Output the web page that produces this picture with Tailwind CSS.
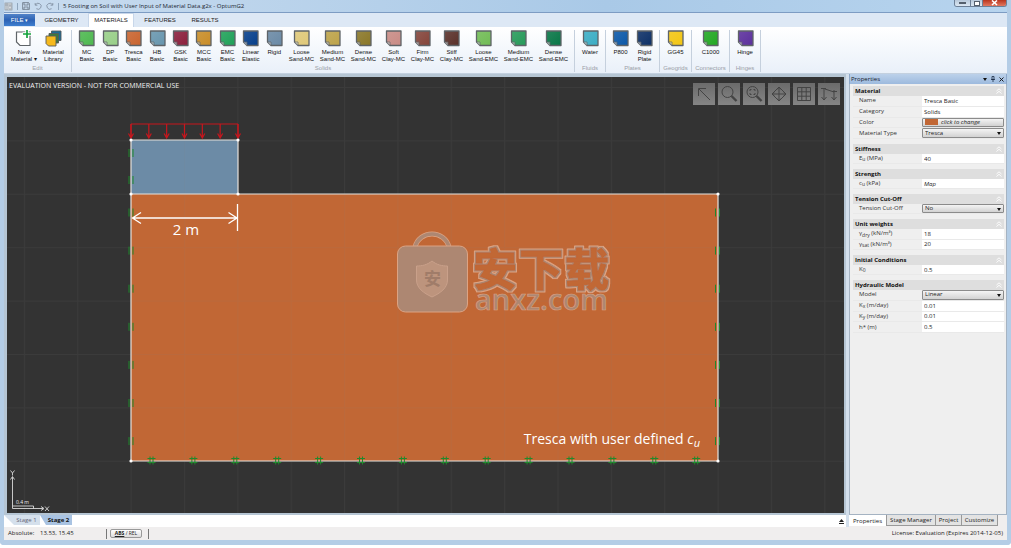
<!DOCTYPE html>
<html lang="en">
<head>
<meta charset="utf-8">
<title>5 Footing on Soil with User Input of Material Data.g2x - OptumG2</title>
<script src="https://cdn.jsdelivr.net/npm/@tailwindcss/browser@4"></script>
</head>
<body class="bg-white font-['Open_Sans',sans-serif] text-[6px] text-[#222]">
<div class="flex h-screen flex-col pb-[3px]">
<div class="flex min-h-0 flex-1 flex-col rounded-b border-x-4 border-b-[5px] border-[#b4cde6] bg-[#b4cde6]">

  <header class="flex h-[13px] shrink-0 items-start justify-between border-b border-[#7d9cc3] bg-linear-to-r from-[#c9dcef] via-[#a9c9e7] via-60% to-[#b7d4ee]">
    <div class="flex h-[12px] items-center gap-[4px]">
      <svg class="h-[9px] w-[9px]" viewBox="0 0 9 9"><rect x="1" y="1" width="7" height="7" fill="#d9dde0" stroke="#8a949e" stroke-width=".7"/><path d="M1 3h7M3 1v7M5 4h2v3H5z" stroke="#8a949e" stroke-width=".7" fill="#fff"/></svg>
      <span class="h-[7px] w-px bg-[#8fa5bc]"></span>
      <button aria-label="Save"><svg class="h-[8px] w-[8px]" viewBox="0 0 8 8" fill="none" stroke="#6d7a88" stroke-width=".8"><path d="M.6.6h6l.8.8v6H.6z"/><path d="M2 .6v2.400h4V.6M2 7.400V5h4v2.400"/></svg></button>
      <button aria-label="Undo"><svg class="h-[8px] w-[8px]" viewBox="0 0 8 8" fill="none" stroke="#8291a3" stroke-width=".9"><path d="M1.200 1v2.200h2.200M1.400 3a3 3 0 1 1 1 3.700"/></svg></button>
      <button aria-label="Redo"><svg class="h-[8px] w-[8px]" viewBox="0 0 8 8" fill="none" stroke="#8291a3" stroke-width=".9"><path d="M6.800 1v2.200H4.600M6.600 3a3 3 0 1 0-1 3.700"/></svg></button>
      <span class="h-[7px] w-px bg-[#8fa5bc]"></span>
      <h1 class="text-[6px] whitespace-nowrap text-[#1c2733]">5 Footing on Soil with User Input of Material Data.g2x - OptumG2</h1>
    </div>
    <div class="flex h-[7px] overflow-hidden rounded-b-[3px] border border-t-0 border-[#6c7f96]">
      <button aria-label="Minimize" class="flex w-[16px] items-center justify-center border-r border-[#6c7f96] bg-linear-to-b from-[#b7c8da] to-[#dce8f3]"><span class="h-[2px] w-[7px] border border-[#55606d] bg-white"></span></button>
      <button aria-label="Restore" class="flex w-[12px] items-center justify-center border-r border-[#6c7f96] bg-linear-to-b from-[#b7c8da] to-[#dce8f3]"><span class="h-[5px] w-[6px] border border-[#55606d] bg-white"></span></button>
      <button aria-label="Close" class="flex w-[23px] items-center justify-center bg-linear-to-b from-[#b8341d] to-[#e2775f]"><svg class="h-[6px] w-[7px]" viewBox="0 0 7 6"><path d="M1 .5l5 4.500M6 .5L1 5" stroke="#fff" stroke-width="1.600"/></svg></button>
    </div>
  </header>

  <nav class="flex h-[14px] shrink-0 items-stretch bg-[#dde8f5] font-['Liberation_Sans',sans-serif] text-[6px] text-[#222]">
    <button class="my-[1px] w-[31px] bg-linear-to-b from-[#5283c8] via-[#2c62b4] to-[#3f7fd0] text-white">FILE <span class="text-[5px]">▾</span></button>
    <a href="#" class="flex w-[53px] items-center justify-center">GEOMETRY</a>
    <a href="#" class="flex w-[46px] items-center justify-center border-x border-t border-[#c8d7ea] bg-white">MATERIALS</a>
    <a href="#" class="flex w-[52px] items-center justify-center">FEATURES</a>
    <a href="#" class="flex w-[38px] items-center justify-center">RESULTS</a>
  </nav>

  <section id="ribbon" aria-label="Materials" class="flex h-[47px] shrink-0 items-stretch border-b border-[#c3d0df] bg-linear-to-b from-white to-[#e9f0f9] pt-[3px] pb-[1px] font-['Liberation_Sans',sans-serif] text-[6px] leading-[7px] text-[#111]"></section>

  <div class="flex min-h-0 flex-1 bg-[#d3dfec]">
    <main class="flex min-w-0 flex-1 flex-col">
      <div class="relative min-h-0 flex-1 border-2 border-t-[3px] border-l-[3px] border-[#b5c5d3] bg-[#333333]">
        <svg class="block h-full w-full" viewBox="7 77 837 436" preserveAspectRatio="xMinYMin slice" font-family="'Open Sans',sans-serif">
          <defs>
            <pattern id="grid" x="130.600" y="87" width="53.360" height="53.400" patternUnits="userSpaceOnUse"><path d="M.5 0v53.400M0 .5h53.360" stroke="#808080" stroke-opacity=".1"/></pattern>
            <filter id="outline" x="-5%" y="-10%" width="110%" height="125%">
              <feMorphology in="SourceAlpha" operator="dilate" radius="2" result="wide"/>
              <feFlood flood-color="#dba384"/><feComposite in2="wide" operator="in" result="rim"/>
              <feMorphology in="SourceAlpha" operator="dilate" radius="1" result="thin"/>
              <feFlood flood-color="#a98570"/><feComposite in2="thin" operator="in" result="line"/>
              <feMerge><feMergeNode in="rim"/><feMergeNode in="line"/><feMergeNode in="SourceGraphic"/></feMerge>
            </filter>
            <g id="roller"><path d="M-1.500-4v8M1.500-4v8M-4-2h8M-4 2h8" stroke="#1f8a2c" stroke-width="1"/></g>
            <g id="side"><path d="M-2-4v8M2-4v8" stroke="#1f8a2c" stroke-width="1"/></g>
            <g id="load"><path d="M0 124v13M-2.500 133.500L0 138l2.500-4.500" fill="none" stroke="#c8161d" stroke-width="1.200"/></g>
          </defs>
          <rect x="131" y="194" width="587" height="267" fill="#c16735"/>
          <rect x="131" y="140" width="107" height="54" fill="#6c8ba6"/>
          <rect x="7" y="77" width="837" height="436" fill="url(#grid)"/>
          <path d="M131 140h107v54H131zM131 194h587v267H131z" fill="none" stroke="#e6e1dc" stroke-width="1.200"/>
          <g id="supports"></g>
          <path d="M131 138v-14h107v14" fill="none" stroke="#c8161d"/>
          <g id="loads"></g>
          <g fill="#fff"><circle cx="131" cy="140" r="1.600"/><circle cx="238" cy="140" r="1.600"/><circle cx="131" cy="194" r="1.600"/><circle cx="238" cy="194" r="1.600"/><circle cx="718" cy="194" r="1.600"/><circle cx="718" cy="461" r="1.600"/><circle cx="131" cy="461" r="1.600"/></g>
          <path d="M132.500 218h104M141 212.500L132.500 218l8.500 5.500M228.500 212.500L237 218l-8.500 5.500M237.500 204v27" fill="none" stroke="#fff" stroke-width="1.300"/>
          <text x="186" y="235" font-size="15" fill="#fff" text-anchor="middle">2 m</text>
          <text x="700" y="444" font-size="14" fill="#fff" text-anchor="end">Tresca with user defined <tspan font-style="italic">c</tspan><tspan font-style="italic" font-size="11" dy="3">u</tspan></text>

          <g>
            <path d="M415 247c2-8 9-13 17-13s15 5 17 13" fill="none" stroke="#dba384" stroke-width="5"/>
            <path d="M415 247c2-8 9-13 17-13s15 5 17 13" fill="none" stroke="#ad8772" stroke-width="3.500"/>
            <rect x="397.500" y="246" width="70" height="66" rx="8" fill="#ad8772" stroke="#dba384"/>
            <path d="M432 261c5 4 10 5 15.500 5v14c0 8-7 13-15.500 17-8.500-4-15.500-9-15.500-17v-14c5.500 0 10.500-1 15.500-5z" fill="#bd947d" stroke="#c9a08a"/>
            <text x="432.500" y="285" font-size="17" font-weight="700" text-anchor="middle" fill="#a07c69" font-family="'Noto Sans CJK SC',sans-serif">安</text>
            <text x="473 519 565" y="286" font-family="'Noto Sans CJK SC',sans-serif" font-size="44" font-weight="700" fill="#c16735" stroke="#c16735" stroke-width="1" stroke-linejoin="round" filter="url(#outline)">安下载</text>
            <text x="475" y="310" font-size="29" font-weight="600" fill="#ad8772" stroke="#dba384" stroke-width=".6">anxz.com</text>
          </g>

          <g fill="none" stroke="#d8d8d8" stroke-width=".9"><path d="M12.500 508.500V477M10.500 479.500l2-3 2 3M12.500 508.500H43M41 506.500l3 2-3 2M12.500 506h21v2.500M10.500 470.500l2 2.500 2-2.500M12.500 473v2.500M45 506.500l4 4.500M49 506.500l-4 4.500"/></g>
          <text x="16" y="504" font-size="5" fill="#eee">0.4 m</text>
        </svg>
        <p class="absolute top-[4px] left-[2px] text-[7px] leading-[10px] text-[#f2f2f2]">EVALUATION VERSION - NOT FOR COMMERCIAL USE</p>
        <div id="tools" class="absolute top-[6px] right-[4px] flex gap-[3px]"></div>
      </div>
      <div class="flex h-[12px] shrink-0 items-start justify-between bg-white pr-[2px]">
        <div class="flex text-[6px] leading-[11px]">
          <button class="h-[10px] w-[36px] bg-[#d5e0ec] pl-[9px] text-[#667] [clip-path:polygon(0_0,100%_0,100%_100%,10px_100%)]">Stage 1</button>
          <button class="h-[10px] w-[32px] bg-[#a9c3e2] pl-[5px] font-bold text-[#111] [clip-path:polygon(0_0,100%_0,100%_100%,6px_100%)]">Stage 2</button>
        </div>
        <button aria-label="Expand" class="mt-[4px]"><svg class="h-[5px] w-[5px]" viewBox="0 0 5 5"><path d="M0 3l2.500-3L5 3zM0 4h5v1H0z" fill="#222"/></svg></button>
      </div>
    </main>

    <aside class="ml-[3px] flex w-[158px] shrink-0 flex-col">
      <div class="flex h-[10px] shrink-0 items-center justify-between border-x border-[#8ba6c8] bg-linear-to-b from-[#bcd1ea] to-[#9dbade] pr-[2px] pl-px text-[#16202c]">
        <h2>Properties</h2>
        <div class="flex items-center gap-[4px]">
          <button aria-label="Panel menu"><svg class="h-[3px] w-[4px]" viewBox="0 0 4 3"><path d="M0 0h4L2 3z" fill="#111"/></svg></button>
          <button aria-label="Pin"><svg class="h-[6px] w-[4px]" viewBox="0 0 4 6"><path d="M1 .5h2v3H1zM0 3.500h4M2 3.500V6" fill="none" stroke="#1b2b45" stroke-width=".8"/></svg></button>
          <button aria-label="Close panel"><svg class="h-[5px] w-[5px]" viewBox="0 0 5 5"><path d="M.5.5l4 4M4.500.5l-4 4" stroke="#111" stroke-width=".9"/></svg></button>
        </div>
      </div>
      <div id="props" class="min-h-0 flex-1 border border-t-0 border-[#a5b3c2] bg-[#efefef] pt-[2px] pr-[2px] pl-[3px] leading-[9px]"></div>
      <div class="flex h-[12px] shrink-0 items-start bg-[#f0eeee] text-[6px] leading-[10px]">
        <button class="h-[11px] w-[38px] border-r border-[#999] bg-white">Properties</button>
        <button class="h-[11px] w-[49px] border-r border-b border-[#999] bg-[#e3e3e3]">Stage Manager</button>
        <button class="h-[11px] w-[26px] border-r border-b border-[#999] bg-[#e3e3e3]">Project</button>
        <button class="h-[11px] w-[36px] border-r border-b border-[#999] bg-[#e3e3e3]">Customize</button>
      </div>
    </aside>
  </div>

  <footer class="flex h-[13px] shrink-0 items-center bg-[#f0eeee] px-[4px]">
    <span class="w-[32px]">Absolute:</span><span class="w-[66px]">13.53, 15.45</span>
    <span class="h-[10px] w-px bg-[#777]"></span>
    <button class="mx-[3px] h-[9px] w-[32px] rounded-[2px] border border-[#999] bg-linear-to-b from-white to-[#ddd] text-[5px] leading-[7px]"><b class="underline">ABS</b> / REL</button>
    <span class="ml-[3px] h-[10px] w-px bg-[#777]"></span>
    <span class="ml-auto">License: Evaluation (Expires 2014-12-05)</span>
  </footer>
</div>
</div>

<script>
const swatch = c => `<svg class="h-[17px] w-[17px]" viewBox="0 0 17 17"><defs><linearGradient id="g${c.slice(1)}" x1="0" y1="0" x2="1" y2="1"><stop stop-color="${c}" stop-opacity=".88"/><stop offset="1" stop-color="${c}"/></linearGradient></defs><path d="M1.500 1H16v14.500H5L1.500 12z" fill="url(#g${c.slice(1)})" stroke="#5f6468" stroke-width="1.300" stroke-linejoin="round"/><path d="M1.500 12H5v3.500" fill="#fff" fill-opacity=".4" stroke="#5f6468" stroke-width=".7"/></svg>`;
const newIcon = `<svg class="h-[17px] w-[17px]" viewBox="0 0 17 17"><path d="M1.500 2H15v13.500H5L1.500 12z" fill="#fff" stroke="#5f6468" stroke-width="1.200"/><path d="M12 0v9M7.500 4H17" stroke="#fff" stroke-width="3.500"/><path d="M12 0v8M8 4h8" stroke="#16a23c" stroke-width="1.700"/></svg>`;
const libIcon = `<svg class="h-[17px] w-[17px]" viewBox="0 0 17 17" stroke="#55595c" stroke-width=".9"><path d="M6.500 1H16v9.500H6.500z" fill="#1b6c94"/><path d="M4 3.500h9.500V13H4z" fill="#3c7a3c"/><path d="M1 6h10v10H3.500L1 13.500z" fill="#f6b91c"/></svg>`;
const groups = [
  {name:'Edit', w:'w-[68px]', rows:[{w:'w-[68px] pl-[5px] pr-[3px]', items:[['New','Material ▾',newIcon],['Material','Library',libIcon]]}]},
  {name:'Solids', w:'w-[503px]', rows:[
    {w:'w-[211px]', items:[['MC','Basic','#4db84f'],['DP','Basic','#98cf88'],['Tresca','Basic','#c9642f'],['HB','Basic','#6896ae'],['GSK','Basic','#8b1f3c'],['MCC','Basic','#c98d28'],['EMC','Basic','#1fa158'],['Linear','Elastic','#063f8b'],['Rigid','','#6a89a5']]},
    {w:'w-[93px]', items:[['Loose','Sand-MC','#dfc878'],['Medium','Sand-MC','#bda349'],['Dense','Sand-MC','#8a7728']]},
    {w:'w-[87px]', items:[['Soft','Clay-MC','#c98b85'],['Firm','Clay-MC','#84443a'],['Stiff','Clay-MC','#5a3029']]},
    {w:'w-[105px]', items:[['Loose','Sand-EMC','#71bc55'],['Medium','Sand-EMC','#269a59'],['Dense','Sand-EMC','#077646']]}]},
  {name:'Fluids', w:'w-[31px]', rows:[{w:'w-[31px]', items:[['Water','','#3badc4']]}]},
  {name:'Plates', w:'w-[54px]', rows:[{w:'w-[48px]', items:[['P800','','#0b58a8'],['Rigid','Plate','#0c2f66']]}]},
  {name:'Geogrids', w:'w-[32px]', rows:[{w:'w-[32px]', items:[['GG45','','#f3c613']]}]},
  {name:'Connectors', w:'w-[38px]', rows:[{w:'w-[32px]', items:[['C1000','','#22a822']]}]},
  {name:'Hinges', w:'w-[31px]', rows:[{w:'w-[31px]', items:[['Hinge','','#5b2f9c']]}]}
];
document.getElementById('ribbon').innerHTML = groups.map(g => `
  <div class="flex ${g.w} shrink-0 flex-col justify-between border-r border-[#c5d0dd]">
    <div class="flex justify-center">${g.rows.map(r => `<div class="flex ${r.w}">${r.items.map(i => `
      <button class="flex min-w-0 flex-1 flex-col items-center whitespace-nowrap">${i[2][0]==='#' ? swatch(i[2]) : i[2]}<span class="mt-[2px]">${i[0]}</span><span>${i[1]}</span></button>`).join('')}</div>`).join('')}</div>
    <div class="text-center whitespace-nowrap text-[#9aa0a7]">${g.name}</div>
  </div>`).join('');

const sections = [
  ['Material','h-[43px]',[['Name','Tresca Basic'],['Category','Solids'],['Color','','color'],['Material Type','Tresca','select']]],
  ['Stiffness','h-[10px]',[['E<sub>u</sub> (MPa)','40']]],
  ['Strength','h-[10px]',[['c<sub>u</sub> (kPa)','Map','italic']]],
  ['Tension Cut-Off','h-[10px]',[['Tension Cut-Off','No','select']]],
  ['Unit weights','h-[21px]',[['γ<sub>dry</sub> (kN/m³)','18'],['γ<sub>sat</sub> (kN/m³)','20']]],
  ['Initial Conditions','h-[10px]',[['K<sub>0</sub>','0.5']]],
  ['Hydraulic Model','h-[43px]',[['Model','Linear','select'],['K<sub>x</sub> (m/day)','0.01'],['K<sub>y</sub> (m/day)','0.01'],['h* (m)','0.5']]]
];
let n = 0;
const field = (v, t) => {
  const id = 'f' + (++n);
  if (t === 'select') return [id, `<div class="relative h-full w-full"><select id="${id}" class="h-full w-full appearance-none rounded-[1px] border border-[#8b8b8b] bg-linear-to-b from-[#f4f4f4] to-[#d2d2d2] pl-[2px] leading-[7px]"><option>${v}</option></select><svg class="pointer-events-none absolute top-[4px] right-[3px] h-[3px] w-[4px]" viewBox="0 0 4 3"><path d="M0 0h4L2 3z" fill="#111"/></svg></div>`];
  if (t === 'color') return [id, `<button id="${id}" class="flex h-full w-full items-center gap-[3px] rounded-[1px] border border-[#8b8b8b] bg-linear-to-b from-[#f4f4f4] to-[#d2d2d2] pl-[2px] leading-[7px] italic"><span class="h-[6px] w-[13px] bg-[#c16735]"></span>click to change</button>`];
  return [id, `<input id="${id}" value="${v}" class="h-full w-full bg-white pl-[2px] ${t === 'italic' ? 'italic' : ''}">`];
};
document.getElementById('props').innerHTML = sections.map(([title, h, rows]) => `
  <section class="mb-[5px]">
    <h3 class="flex h-[10px] items-center justify-between bg-[#dedede] px-[2px] font-bold text-[#111]">${title}<svg class="h-[6px] w-[6px]" viewBox="0 0 6 6"><path d="M.5 3L3 .8 5.500 3M.5 5.500L3 3.300l2.500 2.200" fill="none" stroke="#fff" stroke-width=".9"/></svg></h3>
    <div class="flex flex-col ${h}">${rows.map(([l, v, t]) => { const [id, html] = field(v, t); return `<div class="flex min-h-0 flex-1 items-stretch border-b border-[#e9e9e9]"><label for="${id}" class="flex w-[69px] shrink-0 items-center pl-[6px] whitespace-nowrap text-[#333]"><span class="[&_sub]:text-[5px]">${l}</span></label><div class="min-w-0 flex-1">${html}</div></div>`; }).join('')}</div>
  </section>`).join('');

const tools = [
  ['Select','<path d="M6 6l11 11M5.500 13V5.500H13" />'],
  ['Zoom','<circle cx="9.500" cy="9" r="5.500"/><path d="M13.500 13l5 5" stroke-width="2.400"/>'],
  ['Zoom window','<circle cx="9.500" cy="9" r="5.500"/><path d="M7 8V6.500h1.500M10.500 6.500H12V8M12 10v1.500h-1.500M8.500 11.500H7V10"/><path d="M13.500 13l5 5" stroke-width="2.400"/>'],
  ['Pan','<path d="M11 4l7 7-7 7-7-7zM11 5v12M5 11h12M9 6.500l2-2.500 2 2.500M9 15.500l2 2.500 2-2.500M6.500 9L4 11l2.500 2M15.500 9l2.500 2-2.500 2"/>'],
  ['Grid','<path d="M4.500 4.500h13v13h-13zM8.800 4.500v13M13.200 4.500v13M4.500 8.800h13M4.500 13.200h13"/>'],
  ['Snap','<path d="M6 5.500v11M16 7v9.500M3.500 14l2.500 3 2.500-3M13.500 14l2.500 3 2.500-3M3 5.500h5M7 6l9 3M14 8.500h5"/>']
];
document.getElementById('tools').innerHTML = tools.map(([l, p]) => `<button aria-label="${l}" class="h-[22px] w-[22px] bg-linear-to-b from-[#6b6b6b] to-[#858585]"><svg class="h-[22px] w-[22px]" viewBox="0 0 22 22" fill="none" stroke="#444" stroke-width="1">${p}</svg></button>`).join('');

let s = '';
for (let i = 0; i < 14; i++) s += `<use href="#roller" x="${151.500 + i * 41.900}" y="460.500"/>`;
for (const y of [153, 180]) s += `<use href="#side" x="131" y="${y}"/>`;
for (let i = 0; i < 7; i++) s += `<use href="#side" x="131" y="${212.500 + i * 38.100}"/><use href="#side" x="717.500" y="${212.500 + i * 38.100}"/>`;
document.getElementById('supports').innerHTML = s;
document.getElementById('loads').innerHTML = [0,1,2,3,4,5,6].map(i => `<use href="#load" x="${131 + i * 17.830}"/>`).join('');
</script>
</body>
</html>
